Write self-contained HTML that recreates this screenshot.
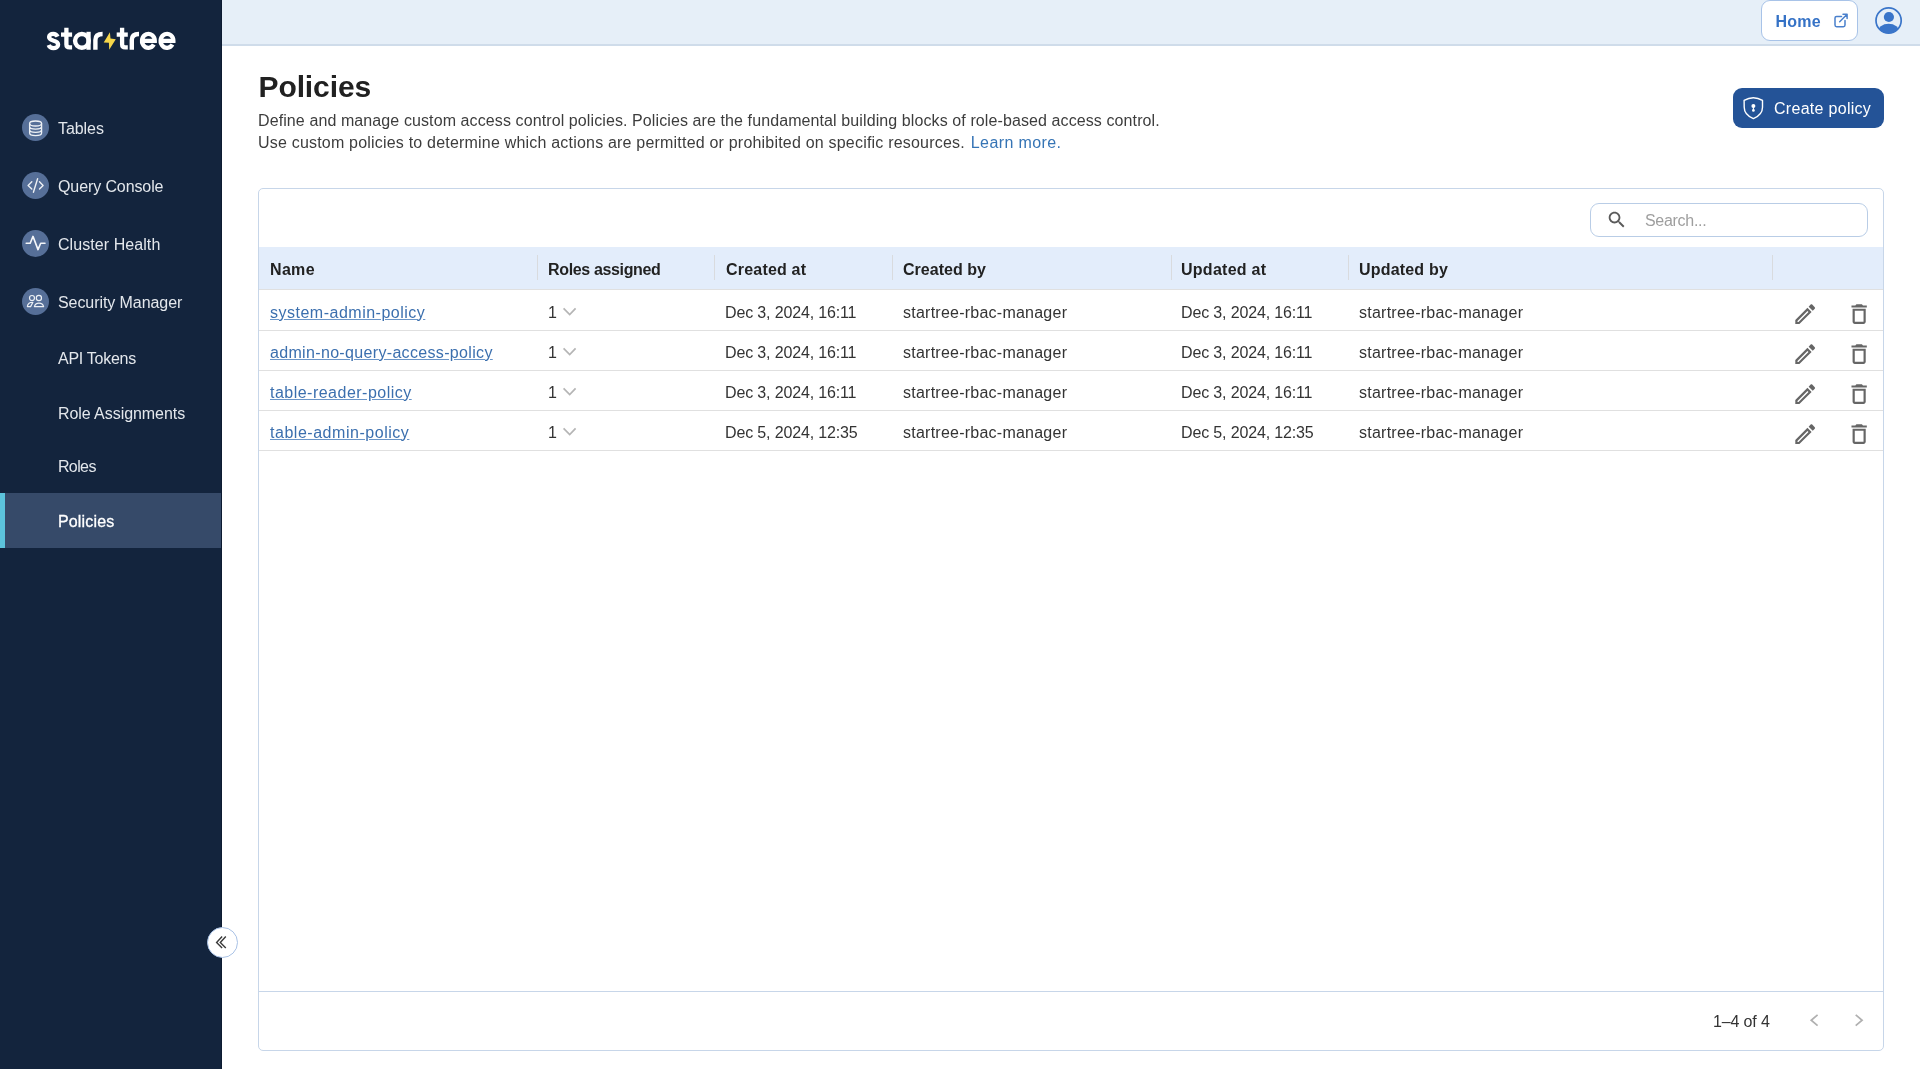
<!DOCTYPE html>
<html><head><meta charset="utf-8">
<style>
*{box-sizing:border-box;margin:0;padding:0}
html,body{width:1920px;height:1069px;overflow:hidden;background:#fff;font-family:"Liberation Sans",sans-serif;}
#root{position:absolute;left:0;top:0;width:1920px;height:1069px;background:#fff;will-change:transform;overflow:hidden}
.a{position:absolute;white-space:nowrap}
svg.a{overflow:visible}
#side{position:absolute;left:0;top:0;width:222px;height:1069px;background:#13243d}
#top{position:absolute;left:222px;top:0;width:1698px;height:46px;background:#e6eff8;border-bottom:2px solid #cfdcea}
.ic{position:absolute;left:22px;width:27px;height:27px;border-radius:50%;background:#566f98}
#sel{position:absolute;left:0;top:493px;width:222px;height:55px;background:#364a69}
#selbar{position:absolute;left:0;top:493px;width:4.5px;height:55px;background:#5cc3dc}
#card{position:absolute;left:258px;top:188px;width:1626px;height:863px;border:1px solid #c7d6e9;border-radius:5px;overflow:hidden}
#hdr{position:absolute;left:0;top:58px;width:100%;height:43px;background:#e3edfb;border-bottom:1px solid #e0e0e0}
.row{position:absolute;left:0;width:100%;border-bottom:1px solid #e0e0e0}
.lk{text-decoration:underline;text-underline-offset:1px;text-decoration-color:#6a95c8}
.sep{position:absolute;top:8px;width:1px;height:25px;background:#d9dbde}
</style></head>
<body><div id="root">
<div id="side">
<svg class="a" style="left:0;top:0" width="222" height="60">
    <g fill="none" stroke="#fff" stroke-width="4.3">
      <path d="M57.6 36.6C56.6 34.6 55.2 33.8 53.3 33.8C50.9 33.8 49.1 35 49.1 37.1C49.1 39.6 51.9 40.1 53.8 40.7C56.3 41.4 58.1 42.4 58.1 44.7C58.1 46.9 56 48.1 53.4 48.1C51.2 48.1 49.4 47 48.7 45.1"/>
      <path d="M66.40 27.7V44.5C66.40 46.6 67.40 47.4 69.60 47.4H72.10"/><path d="M61.00 34.6H72.10"/>
      <circle cx="81.9" cy="40.85" r="6.85" stroke-width="4.4"/>
      <path d="M88.55 31.8V49.8"/>
      <path d="M95.40 49.8V40C95.40 36.2 97.60 34.05 102.60 34.05" stroke-width="4.4"/>
      <path d="M122.10 27.7V44.5C122.10 46.6 123.10 47.4 125.30 47.4H127.80"/><path d="M116.70 34.6H127.80"/>
      <path d="M131.80 49.8V40C131.80 36.2 134.00 34.05 139.00 34.05" stroke-width="4.4"/>
      <path d="M142.00 40.95H154.80A6.4 7.0 0 1 0 153.83 44.56" stroke-width="4.25"/>
      <path d="M160.60 40.95H173.40A6.4 7.0 0 1 0 172.43 44.56" stroke-width="4.25"/>
    </g>
    <polygon fill="#f5d54a" points="109.9,32.2 110.5,38.6 115.8,39.2 109.2,49.7 108.9,42.8 103.7,42.5"/>
  </svg>
<div class="ic" style="top:114px"></div>
<svg class="a" style="left:20px;top:112px" width="32" height="32"><g fill="none" stroke="#eef1f5" stroke-width="1.3"><ellipse cx="15.6" cy="11.5" rx="6" ry="2.5"/><path d="M9.6 11.5V21M21.6 11.5V21M9.6 14.6A6 2.6 0 0 0 21.6 14.6M9.6 17.8A6 2.6 0 0 0 21.6 17.8M9.6 21A6 2.6 0 0 0 21.6 21"/></g></svg>
<div class="a" style="left:58px;top:118.9px;font-size:16px;line-height:20px;color:#e3e7ec;font-weight:normal;letter-spacing:-0.06px;">Tables</div>
<div class="ic" style="top:172px"></div>
<svg class="a" style="left:20px;top:170px" width="32" height="32"><g fill="none" stroke="#eef1f5" stroke-width="1.4" stroke-linecap="round" stroke-linejoin="round"><path d="M11.8 11.8L8.1 15.4L11.8 19M19.5 11.8L23.1 15.4L19.5 19M17.6 8.7L13.4 22.2"/></g></svg>
<div class="a" style="left:58px;top:176.8px;font-size:16px;line-height:20px;color:#e3e7ec;font-weight:normal;letter-spacing:-0.1px;">Query Console</div>
<div class="ic" style="top:230px"></div>
<svg class="a" style="left:20px;top:228px" width="32" height="32"><g fill="none" stroke="#f4f6f9" stroke-width="1.6" stroke-linecap="round" stroke-linejoin="round"><path d="M6.2 15.3H10.2L13 8.4L18 21.6L20.7 15.3H25"/></g></svg>
<div class="a" style="left:58px;top:235.0px;font-size:16px;line-height:20px;color:#e3e7ec;font-weight:normal;letter-spacing:0.07px;">Cluster Health</div>
<div class="ic" style="top:288px"></div>
<svg class="a" style="left:20px;top:286px" width="32" height="32"><g fill="none" stroke="#eef1f5" stroke-width="1.2" stroke-linejoin="round"><circle cx="12" cy="12" r="2.5"/><circle cx="18.9" cy="12" r="2.6"/><path d="M14.4 20.6A4.7 4.4 0 0 1 23.6 20.6Z"/><path d="M12.9 16.3L10.6 20.6H7.4A4.8 4.4 0 0 1 12.9 16.3Z"/></g></svg>
<div class="a" style="left:58px;top:292.7px;font-size:16px;line-height:20px;color:#e3e7ec;font-weight:normal;letter-spacing:-0.07px;">Security Manager</div>
<div class="a" style="left:58px;top:348.9px;font-size:16px;line-height:20px;color:#e3e7ec;font-weight:normal;letter-spacing:-0.27px;">API Tokens</div>
<div class="a" style="left:57.9px;top:403.5px;font-size:16px;line-height:20px;color:#e3e7ec;font-weight:normal;letter-spacing:-0.05px;">Role Assignments</div>
<div class="a" style="left:57.9px;top:457.4px;font-size:16px;line-height:20px;color:#e3e7ec;font-weight:normal;letter-spacing:-0.6px;">Roles</div>
<div id="sel"></div><div id="selbar"></div>
<div class="a" style="left:58px;top:511.5px;font-size:16px;line-height:20px;color:#fff;font-weight:normal;letter-spacing:0.15px;-webkit-text-stroke:0.3px #fff">Policies</div>
<div class="a" style="left:221px;top:0;width:1px;height:1069px;background:#0d1b31"></div>
</div>
<div id="top"></div>
<div class="a" style="left:1761px;top:0;width:97px;height:41px;background:#fff;border:1px solid #a8c3e8;border-radius:9px"></div>
<div class="a" style="left:1775.5px;top:11.8px;font-size:16px;line-height:20px;color:#3572c6;font-weight:bold;letter-spacing:0.2px;">Home</div>
<svg class="a" style="left:0;top:0" width="1920" height="44"><g fill="none" stroke="#4a80cc" stroke-width="1.5" stroke-linecap="round" stroke-linejoin="round"><path d="M1841.5 16.5H1836.6Q1835 16.5 1835 18.1V25.1Q1835 26.7 1836.6 26.7H1843.4Q1845 26.7 1845 25.1V20.6"/><path d="M1839.7 21.7L1847.1 14.3M1843 14.3H1847.1V18.5"/></g></svg>
<svg class="a" style="left:1860px;top:0" width="60" height="44">
  <defs><clipPath id="uc"><circle cx="28.6" cy="20.45" r="12.9"/></clipPath></defs>
  <circle cx="28.6" cy="20.45" r="12.6" fill="none" stroke="#3a75c9" stroke-width="1.7"/>
  <circle cx="28.9" cy="17" r="5.1" fill="#3a75c9"/>
  <ellipse cx="28.6" cy="32" rx="11" ry="8.3" fill="#3a75c9" clip-path="url(#uc)"/>
</svg>
<div class="a" style="left:258.5px;top:68.6px;font-size:30px;line-height:36px;color:#212121;font-weight:bold;letter-spacing:-0.1px;">Policies</div>
<div class="a" style="left:258px;top:110.5px;font-size:16px;line-height:20px;color:#3d3d3d;font-weight:normal;letter-spacing:0.1px;">Define and manage custom access control policies. Policies are the fundamental building blocks of role-based access control.</div>
<div class="a" style="left:258px;top:133.2px;font-size:16px;line-height:20px;color:#3d3d3d;font-weight:normal;letter-spacing:0.2px;">Use custom policies to determine which actions are permitted or prohibited on specific resources.<span style="color:#3574b5;letter-spacing:0.38px;margin-left:6px">Learn more.</span></div>
<div class="a" style="left:1733px;top:88px;width:151px;height:40px;background:#245397;border-radius:9px"></div>
<svg class="a" style="left:1733px;top:88px" width="151" height="40">
  <path d="M11.1 12.4Q20.4 7.1 29.5 12.4V19.2C29.5 24.2 25.6 28.4 20.4 30.6C15.2 28.4 11.2 24.2 11.2 19.2Z" fill="none" stroke="#fff" stroke-width="1.4" stroke-linejoin="round"/>
  <circle cx="20.4" cy="18.1" r="2" fill="#fff"/><circle cx="20.4" cy="22.4" r="1.35" fill="#fff"/><rect x="19.85" y="18.5" width="1.1" height="4" fill="#fff"/>
</svg>
<div class="a" style="left:1774px;top:99.4px;font-size:16px;line-height:20px;color:#fff;font-weight:normal;letter-spacing:0.29px;">Create policy</div>
<div class="a" style="left:206.6px;top:926.8px;width:31px;height:31px;border-radius:50%;background:#fff;border:1.5px solid #a9c2e6"></div>
<svg class="a" style="left:206px;top:926px" width="32" height="32"><path d="M16.1 10.6L10.6 16.4L16.1 21.9M19.8 10.6L14.3 16.4L19.8 21.9" fill="none" stroke="#3a3a3a" stroke-width="1.4"/></svg>
<div id="card">
<div class="a" style="left:1331px;top:14px;width:278px;height:34px;border:1px solid #b9cde6;border-radius:9px"></div>
<svg class="a" style="left:1346.7px;top:19.5px" width="21.6" height="21.6" viewBox="0 0 24 24"><path fill="#5a5a5a" d="M15.5 14h-.79l-.28-.27C15.41 12.59 16 11.11 16 9.5 16 5.91 13.09 3 9.5 3S3 5.91 3 9.5 5.91 16 9.5 16c1.61 0 3.09-.59 4.23-1.57l.27.28v.79l5 4.99L20.49 19l-4.99-5zm-6 0C7.01 14 5 11.99 5 9.5S7.01 5 9.5 5 14 7.01 14 9.5 11.99 14 9.5 14z"/></svg>
<div class="a" style="left:1386px;top:21.6px;font-size:16px;line-height:20px;color:#9e9e9e;font-weight:normal;letter-spacing:-0.3px;">Search...</div>
<div id="hdr">
<div class="a" style="left:11px;top:12.6px;font-size:16px;line-height:20px;color:#222;font-weight:bold;letter-spacing:0.33px;">Name</div>
<div class="a" style="left:289px;top:12.6px;font-size:16px;line-height:20px;color:#222;font-weight:bold;letter-spacing:-0.346px;">Roles assigned</div>
<div class="a" style="left:467px;top:12.6px;font-size:16px;line-height:20px;color:#222;font-weight:bold;letter-spacing:0.2px;">Created at</div>
<div class="a" style="left:644px;top:12.6px;font-size:16px;line-height:20px;color:#222;font-weight:bold;letter-spacing:0.03px;">Created by</div>
<div class="a" style="left:922px;top:12.6px;font-size:16px;line-height:20px;color:#222;font-weight:bold;letter-spacing:0.267px;">Updated at</div>
<div class="a" style="left:1100px;top:12.6px;font-size:16px;line-height:20px;color:#222;font-weight:bold;letter-spacing:0.19px;">Updated by</div>
<div class="sep" style="left:277.6px"></div>
<div class="sep" style="left:455.3px"></div>
<div class="sep" style="left:632.8px"></div>
<div class="sep" style="left:911.6px"></div>
<div class="sep" style="left:1088.6px"></div>
<div class="sep" style="left:1513.4px"></div>
</div>
<div class="row" style="top:101px;height:41px"></div>
<div class="a lk" style="left:11px;top:113.55px;font-size:16px;line-height:20px;color:#3b6fae;font-weight:normal;letter-spacing:0.5px;">system-admin-policy</div>
<div class="a" style="left:289px;top:113.55px;font-size:16px;line-height:20px;color:#333;font-weight:normal;letter-spacing:0px;">1</div>
<svg class="a" style="left:300px;top:116.0px" width="20" height="12"><path d="M4.6 3.3L10.7 9.5L16.6 3.3" fill="none" stroke="#b5b5b5" stroke-width="1.7"/></svg>
<div class="a" style="left:466px;top:113.55px;font-size:16px;line-height:20px;color:#333;font-weight:normal;letter-spacing:-0.15px;">Dec 3, 2024, 16:11</div>
<div class="a" style="left:644px;top:113.55px;font-size:16px;line-height:20px;color:#333;font-weight:normal;letter-spacing:0.24px;">startree-rbac-manager</div>
<div class="a" style="left:922px;top:113.55px;font-size:16px;line-height:20px;color:#333;font-weight:normal;letter-spacing:-0.15px;">Dec 3, 2024, 16:11</div>
<div class="a" style="left:1100px;top:113.55px;font-size:16px;line-height:20px;color:#333;font-weight:normal;letter-spacing:0.24px;">startree-rbac-manager</div>
<svg class="a" style="left:1533.2px;top:111.7px" width="26.4" height="26.4" viewBox="0 0 24 24"><path fill="#666" d="M3 17.25V21h3.75L17.81 9.94l-3.75-3.75L3 17.25zM5.92 19H5v-.92l9.06-9.06.92.92L5.92 19zM20.71 5.63l-2.34-2.34c-.39-.39-1.02-.39-1.41 0l-1.83 1.83 3.75 3.75 1.83-1.83c.39-.39.39-1.02 0-1.410z"/></svg>
<svg class="a" style="left:1586.5px;top:111.7px" width="26.3" height="26.3" viewBox="0 0 24 24"><path fill="#666" d="M16 9v10H8V9h8m-1.5-6h-5l-1 1H5v2h14V4h-3.5l-1-1zM18 7H6v12c0 1.1.9 2 2 2h8c1.1 0 2-.9 2-2V7z"/></svg>
<div class="row" style="top:142px;height:40px"></div>
<div class="a lk" style="left:11px;top:153.55px;font-size:16px;line-height:20px;color:#3b6fae;font-weight:normal;letter-spacing:0.333px;">admin-no-query-access-policy</div>
<div class="a" style="left:289px;top:153.55px;font-size:16px;line-height:20px;color:#333;font-weight:normal;letter-spacing:0px;">1</div>
<svg class="a" style="left:300px;top:156.0px" width="20" height="12"><path d="M4.6 3.3L10.7 9.5L16.6 3.3" fill="none" stroke="#b5b5b5" stroke-width="1.7"/></svg>
<div class="a" style="left:466px;top:153.55px;font-size:16px;line-height:20px;color:#333;font-weight:normal;letter-spacing:-0.15px;">Dec 3, 2024, 16:11</div>
<div class="a" style="left:644px;top:153.55px;font-size:16px;line-height:20px;color:#333;font-weight:normal;letter-spacing:0.24px;">startree-rbac-manager</div>
<div class="a" style="left:922px;top:153.55px;font-size:16px;line-height:20px;color:#333;font-weight:normal;letter-spacing:-0.15px;">Dec 3, 2024, 16:11</div>
<div class="a" style="left:1100px;top:153.55px;font-size:16px;line-height:20px;color:#333;font-weight:normal;letter-spacing:0.24px;">startree-rbac-manager</div>
<svg class="a" style="left:1533.2px;top:151.7px" width="26.4" height="26.4" viewBox="0 0 24 24"><path fill="#666" d="M3 17.25V21h3.75L17.81 9.94l-3.75-3.75L3 17.25zM5.92 19H5v-.92l9.06-9.06.92.92L5.92 19zM20.71 5.63l-2.34-2.34c-.39-.39-1.02-.39-1.41 0l-1.83 1.83 3.75 3.75 1.83-1.83c.39-.39.39-1.02 0-1.410z"/></svg>
<svg class="a" style="left:1586.5px;top:151.7px" width="26.3" height="26.3" viewBox="0 0 24 24"><path fill="#666" d="M16 9v10H8V9h8m-1.5-6h-5l-1 1H5v2h14V4h-3.5l-1-1zM18 7H6v12c0 1.1.9 2 2 2h8c1.1 0 2-.9 2-2V7z"/></svg>
<div class="row" style="top:182px;height:40px"></div>
<div class="a lk" style="left:11px;top:193.55px;font-size:16px;line-height:20px;color:#3b6fae;font-weight:normal;letter-spacing:0.483px;">table-reader-policy</div>
<div class="a" style="left:289px;top:193.55px;font-size:16px;line-height:20px;color:#333;font-weight:normal;letter-spacing:0px;">1</div>
<svg class="a" style="left:300px;top:196.0px" width="20" height="12"><path d="M4.6 3.3L10.7 9.5L16.6 3.3" fill="none" stroke="#b5b5b5" stroke-width="1.7"/></svg>
<div class="a" style="left:466px;top:193.55px;font-size:16px;line-height:20px;color:#333;font-weight:normal;letter-spacing:-0.15px;">Dec 3, 2024, 16:11</div>
<div class="a" style="left:644px;top:193.55px;font-size:16px;line-height:20px;color:#333;font-weight:normal;letter-spacing:0.24px;">startree-rbac-manager</div>
<div class="a" style="left:922px;top:193.55px;font-size:16px;line-height:20px;color:#333;font-weight:normal;letter-spacing:-0.15px;">Dec 3, 2024, 16:11</div>
<div class="a" style="left:1100px;top:193.55px;font-size:16px;line-height:20px;color:#333;font-weight:normal;letter-spacing:0.24px;">startree-rbac-manager</div>
<svg class="a" style="left:1533.2px;top:191.7px" width="26.4" height="26.4" viewBox="0 0 24 24"><path fill="#666" d="M3 17.25V21h3.75L17.81 9.94l-3.75-3.75L3 17.25zM5.92 19H5v-.92l9.06-9.06.92.92L5.92 19zM20.71 5.63l-2.34-2.34c-.39-.39-1.02-.39-1.41 0l-1.83 1.83 3.75 3.75 1.83-1.83c.39-.39.39-1.02 0-1.410z"/></svg>
<svg class="a" style="left:1586.5px;top:191.7px" width="26.3" height="26.3" viewBox="0 0 24 24"><path fill="#666" d="M16 9v10H8V9h8m-1.5-6h-5l-1 1H5v2h14V4h-3.5l-1-1zM18 7H6v12c0 1.1.9 2 2 2h8c1.1 0 2-.9 2-2V7z"/></svg>
<div class="row" style="top:222px;height:40px"></div>
<div class="a lk" style="left:11px;top:233.55px;font-size:16px;line-height:20px;color:#3b6fae;font-weight:normal;letter-spacing:0.529px;">table-admin-policy</div>
<div class="a" style="left:289px;top:233.55px;font-size:16px;line-height:20px;color:#333;font-weight:normal;letter-spacing:0px;">1</div>
<svg class="a" style="left:300px;top:236.0px" width="20" height="12"><path d="M4.6 3.3L10.7 9.5L16.6 3.3" fill="none" stroke="#b5b5b5" stroke-width="1.7"/></svg>
<div class="a" style="left:466px;top:233.55px;font-size:16px;line-height:20px;color:#333;font-weight:normal;letter-spacing:-0.15px;">Dec 5, 2024, 12:35</div>
<div class="a" style="left:644px;top:233.55px;font-size:16px;line-height:20px;color:#333;font-weight:normal;letter-spacing:0.24px;">startree-rbac-manager</div>
<div class="a" style="left:922px;top:233.55px;font-size:16px;line-height:20px;color:#333;font-weight:normal;letter-spacing:-0.15px;">Dec 5, 2024, 12:35</div>
<div class="a" style="left:1100px;top:233.55px;font-size:16px;line-height:20px;color:#333;font-weight:normal;letter-spacing:0.24px;">startree-rbac-manager</div>
<svg class="a" style="left:1533.2px;top:231.7px" width="26.4" height="26.4" viewBox="0 0 24 24"><path fill="#666" d="M3 17.25V21h3.75L17.81 9.94l-3.75-3.75L3 17.25zM5.92 19H5v-.92l9.06-9.06.92.92L5.92 19zM20.71 5.63l-2.34-2.34c-.39-.39-1.02-.39-1.41 0l-1.83 1.83 3.75 3.75 1.83-1.83c.39-.39.39-1.02 0-1.410z"/></svg>
<svg class="a" style="left:1586.5px;top:231.7px" width="26.3" height="26.3" viewBox="0 0 24 24"><path fill="#666" d="M16 9v10H8V9h8m-1.5-6h-5l-1 1H5v2h14V4h-3.5l-1-1zM18 7H6v12c0 1.1.9 2 2 2h8c1.1 0 2-.9 2-2V7z"/></svg>
<div class="a" style="left:0;top:802px;width:100%;height:1px;background:#c7d6e9"></div>
<div class="a" style="left:1454px;top:823.3px;font-size:16px;line-height:20px;color:#333;font-weight:normal;letter-spacing:-0.15px;">1–4 of 4</div>
<svg class="a" style="left:0;top:0" width="1624" height="861"><path d="M1558.6 825.8L1552.2 831.25L1558.6 836.7M1596.7 825.8L1603.1 831.25L1596.7 836.7" fill="none" stroke="#b0b0b0" stroke-width="1.7"/></svg>
</div>
</div></body></html>
